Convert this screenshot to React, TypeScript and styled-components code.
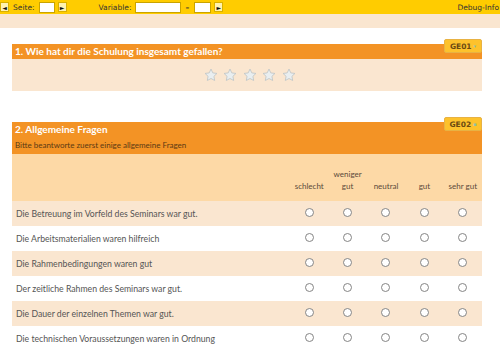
import { createGlobalStyle } from "styled-components";
import styled from "styled-components";

const GlobalStyle = createGlobalStyle`
  html, body {
    margin: 0;
    padding: 0;
    background: #ffffff;
  }
  body {
    font-family: "Lato", "Open Sans", sans-serif;
    width: 500px;
    height: 348px;
    overflow: hidden;
  }
`;

const columns = ["schlecht", "weniger gut", "neutral", "gut", "sehr gut"];

const questions = [
  "Die Betreuung im Vorfeld des Seminars war gut.",
  "Die Arbeitsmaterialien waren hilfreich",
  "Die Rahmenbedingungen waren gut",
  "Der zeitliche Rahmen des Seminars war gut.",
  "Die Dauer der einzelnen Themen war gut.",
  "Die technischen Voraussetzungen waren in Ordnung",
];

const Star = () => (
  <svg width="14" height="14" viewBox="0 0 24 24">
    <path
      d="M12 1.8l3.1 6.6 7.1.9-5.2 5 1.3 7.1L12 18l-6.3 3.4 1.3-7.1-5.2-5 7.1-.9z"
      fill="#e9eef0"
      stroke="#b9c1c4"
      strokeWidth="1.3"
      strokeLinejoin="round"
    />
  </svg>
);

export default function App() {
  return (
    <>
      <GlobalStyle />
      <Toolbar>
        <NavButton>◄</NavButton>
        <ToolLabel>Seite:</ToolLabel>
        <ToolInput $width={14} />
        <NavButton>►</NavButton>
        <Spacer $width={28} />
        <ToolLabel>Variable:</ToolLabel>
        <ToolInput $width={44} />
        <Dash>–</Dash>
        <ToolInput $width={15} />
        <NavButton>►</NavButton>
        <Debug>Debug-Info</Debug>
      </Toolbar>
      <Strip />
      <Main>
        <Section $first>
          <Badge>
            GE01<BadgeMark>▾</BadgeMark>
          </Badge>
          <Header>
            <Title>1. Wie hat dir die Schulung insgesamt gefallen?</Title>
          </Header>
          <StarBody>
            <Stars>
              {[0, 1, 2, 3, 4].map((i) => (
                <Star key={i} />
              ))}
            </Stars>
          </StarBody>
        </Section>

        <Section>
          <Badge>
            GE02<BadgeMark>▪</BadgeMark>
          </Badge>
          <Header>
            <Title>2. Allgemeine Fragen</Title>
            <Subtitle>Bitte beantworte zuerst einige allgemeine Fragen</Subtitle>
          </Header>
          <Grid>
            <HeadCell />
            {columns.map((c) => (
              <HeadCell key={c}>{c}</HeadCell>
            ))}
            {questions.map((q, i) => (
              <Row key={q} $odd={i % 2 === 0}>
                <QuestionCell>{q}</QuestionCell>
                {columns.map((c) => (
                  <RadioCell key={c}>
                    <Radio />
                  </RadioCell>
                ))}
              </Row>
            ))}
          </Grid>
        </Section>
      </Main>
    </>
  );
}

const Toolbar = styled.div`
  display: flex;
  align-items: center;
  height: 14px;
  background: #ffcc00;
  font-family: "DejaVu Sans", Verdana, sans-serif;
  font-size: 7.5px;
  color: #333;
`;

const NavButton = styled.span`
  display: flex;
  align-items: center;
  justify-content: center;
  width: 9px;
  height: 10px;
  box-sizing: border-box;
  background: #fff2b0;
  border: 1px solid #d9b000;
  font-size: 6px;
  color: #111;
  margin-left: 3px;
  &:first-child {
    margin-left: 0;
  }
`;

const ToolLabel = styled.span`
  margin-left: 4px;
  margin-right: 3px;
`;

const ToolInput = styled.span<{ $width: number }>`
  width: ${(p) => p.$width}px;
  height: 9px;
  background: #fff;
  border: 1px solid #c9a300;
  margin-left: 1px;
`;

const Spacer = styled.span<{ $width: number }>`
  width: ${(p) => p.$width}px;
`;

const Dash = styled.span`
  margin: 0 4px;
  font-weight: bold;
`;

const Debug = styled.span`
  margin-left: auto;
  margin-right: 1px;
`;

const Strip = styled.div`
  height: 14px;
  background: #fae6d0;
`;

const Main = styled.div`
  padding-left: 12px;
  width: 470px;
`;

const Section = styled.section<{ $first?: boolean }>`
  position: relative;
  margin-top: ${(p) => (p.$first ? 16 : 31)}px;
`;

const Badge = styled.div`
  position: absolute;
  right: 0;
  top: -5px;
  width: 38px;
  height: 14px;
  box-sizing: border-box;
  display: flex;
  align-items: center;
  justify-content: center;
  gap: 2px;
  background: #fdc22c;
  border: 1px solid #e8b243;
  border-radius: 2px;
  font-family: "DejaVu Sans", Verdana, sans-serif;
  font-weight: bold;
  font-size: 7.5px;
  color: #6b4b12;
`;

const BadgeMark = styled.span`
  font-size: 5px;
  color: #8fc1a9;
`;

const Header = styled.div`
  background: #f39325;
  padding: 2px 3px;
  display: flex;
  flex-direction: column;
  justify-content: center;
  min-height: 11px;
`;

const Title = styled.div`
  color: #fff;
  font-weight: bold;
  font-size: 10px;
  line-height: 11px;
`;

const Subtitle = styled.div`
  color: #5b3a14;
  font-size: 8px;
  line-height: 12px;
  margin-top: 4px;
  margin-bottom: 1px;
`;

const StarBody = styled.div`
  background: #fae6d0;
  height: 32px;
  display: flex;
  justify-content: center;
  padding-top: 9px;
  box-sizing: border-box;
`;

const Stars = styled.div`
  display: flex;
  gap: 5.5px;
  margin-left: 5px;
`;

const Grid = styled.div`
  display: grid;
  grid-template-columns: 278px repeat(5, 1fr);
`;

const HeadCell = styled.div`
  background: #fdd9a6;
  height: 47px;
  display: flex;
  align-items: flex-end;
  justify-content: center;
  text-align: center;
  padding: 0 4px 9px;
  box-sizing: border-box;
  font-size: 8px;
  line-height: 12px;
  color: #5b4a3a;
`;

const Row = styled.div<{ $odd: boolean }>`
  display: contents;
  & > div {
    background: ${(p) => (p.$odd ? "#fae6d0" : "#ffffff")};
  }
`;

const QuestionCell = styled.div`
  height: 25px;
  display: flex;
  align-items: center;
  padding-left: 4px;
  font-size: 8.7px;
  color: #555;
`;

const RadioCell = styled.div`
  height: 25px;
  display: flex;
  align-items: center;
  justify-content: center;
`;

const Radio = styled.span`
  width: 9px;
  height: 9px;
  box-sizing: border-box;
  border: 1px solid #858585;
  border-radius: 50%;
  background: #fff;
  margin-top: -2px;
`;
